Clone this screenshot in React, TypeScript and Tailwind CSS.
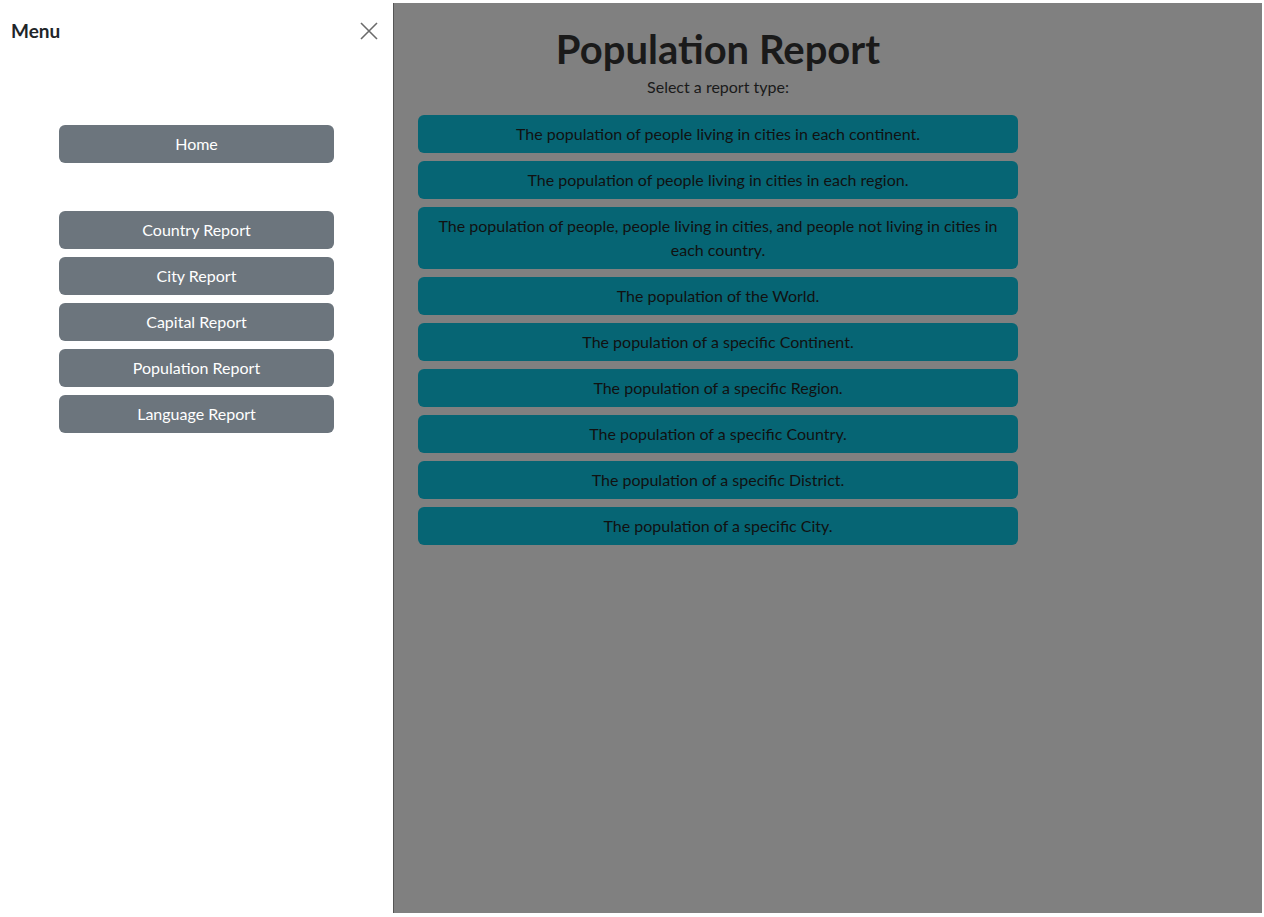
export default function App() {
  const side = ["Country Report", "City Report", "Capital Report", "Population Report", "Language Report"];
  const items = [
    "The population of people living in cities in each continent.",
    "The population of people living in cities in each region.",
    "The population of people, people living in cities, and people not living in cities in each country.",
    "The population of the World.",
    "The population of a specific Continent.",
    "The population of a specific Region.",
    "The population of a specific Country.",
    "The population of a specific District.",
    "The population of a specific City.",
  ];
  return (
    <div className="flex w-[1264px] h-[917px] bg-white overflow-hidden" style={{ fontFamily: "Lato, 'Open Sans', sans-serif" }}>
      <aside className="w-[393px] shrink-0 flex flex-col">
        <div className="flex items-center justify-between pl-[11px] pr-[14px] pt-[18px] h-[44px]">
          <span className="text-[19px] font-bold text-[#212529]">Menu</span>
          <svg width="20" height="20" viewBox="0 0 20 20" stroke="#6b6b6b" strokeWidth="1.6"><path d="M2 2 L18 18 M18 2 L2 18" /></svg>
        </div>
        <div className="flex flex-col items-center mt-[81px]">
          <button className="w-[275px] h-[38px] rounded-[6px] bg-[#6c757d] text-white text-[16px]">Home</button>
          <div className="flex flex-col gap-[8px] mt-[48px]">
            {side.map((s) => (
              <button key={s} className="w-[275px] h-[38px] rounded-[6px] bg-[#6c757d] text-white text-[16px]">{s}</button>
            ))}
          </div>
        </div>
      </aside>
      <div className="flex-1 pt-[3px] pb-[4px] pr-[2px]">
        <main className="h-full bg-[#808080] border-l border-[#555] pl-[24px]">
          <div className="w-[600px] flex flex-col items-center">
            <h1 className="text-[40px] font-bold text-[#1a1a1a] leading-[1.2] mt-[22px]">Population Report</h1>
            <p className="text-[16px] text-[#1a1a1a] mt-[2px]">Select a report type:</p>
            <div className="flex flex-col gap-[8px] w-full mt-[16px]">
              {items.map((t) => (
                <div key={t} className="w-full min-h-[38px] rounded-[6px] bg-[#066574] text-[#111] text-[16px] leading-[24px] text-center px-[12px] py-[7px]">{t}</div>
              ))}
            </div>
          </div>
        </main>
      </div>
    </div>
  );
}
